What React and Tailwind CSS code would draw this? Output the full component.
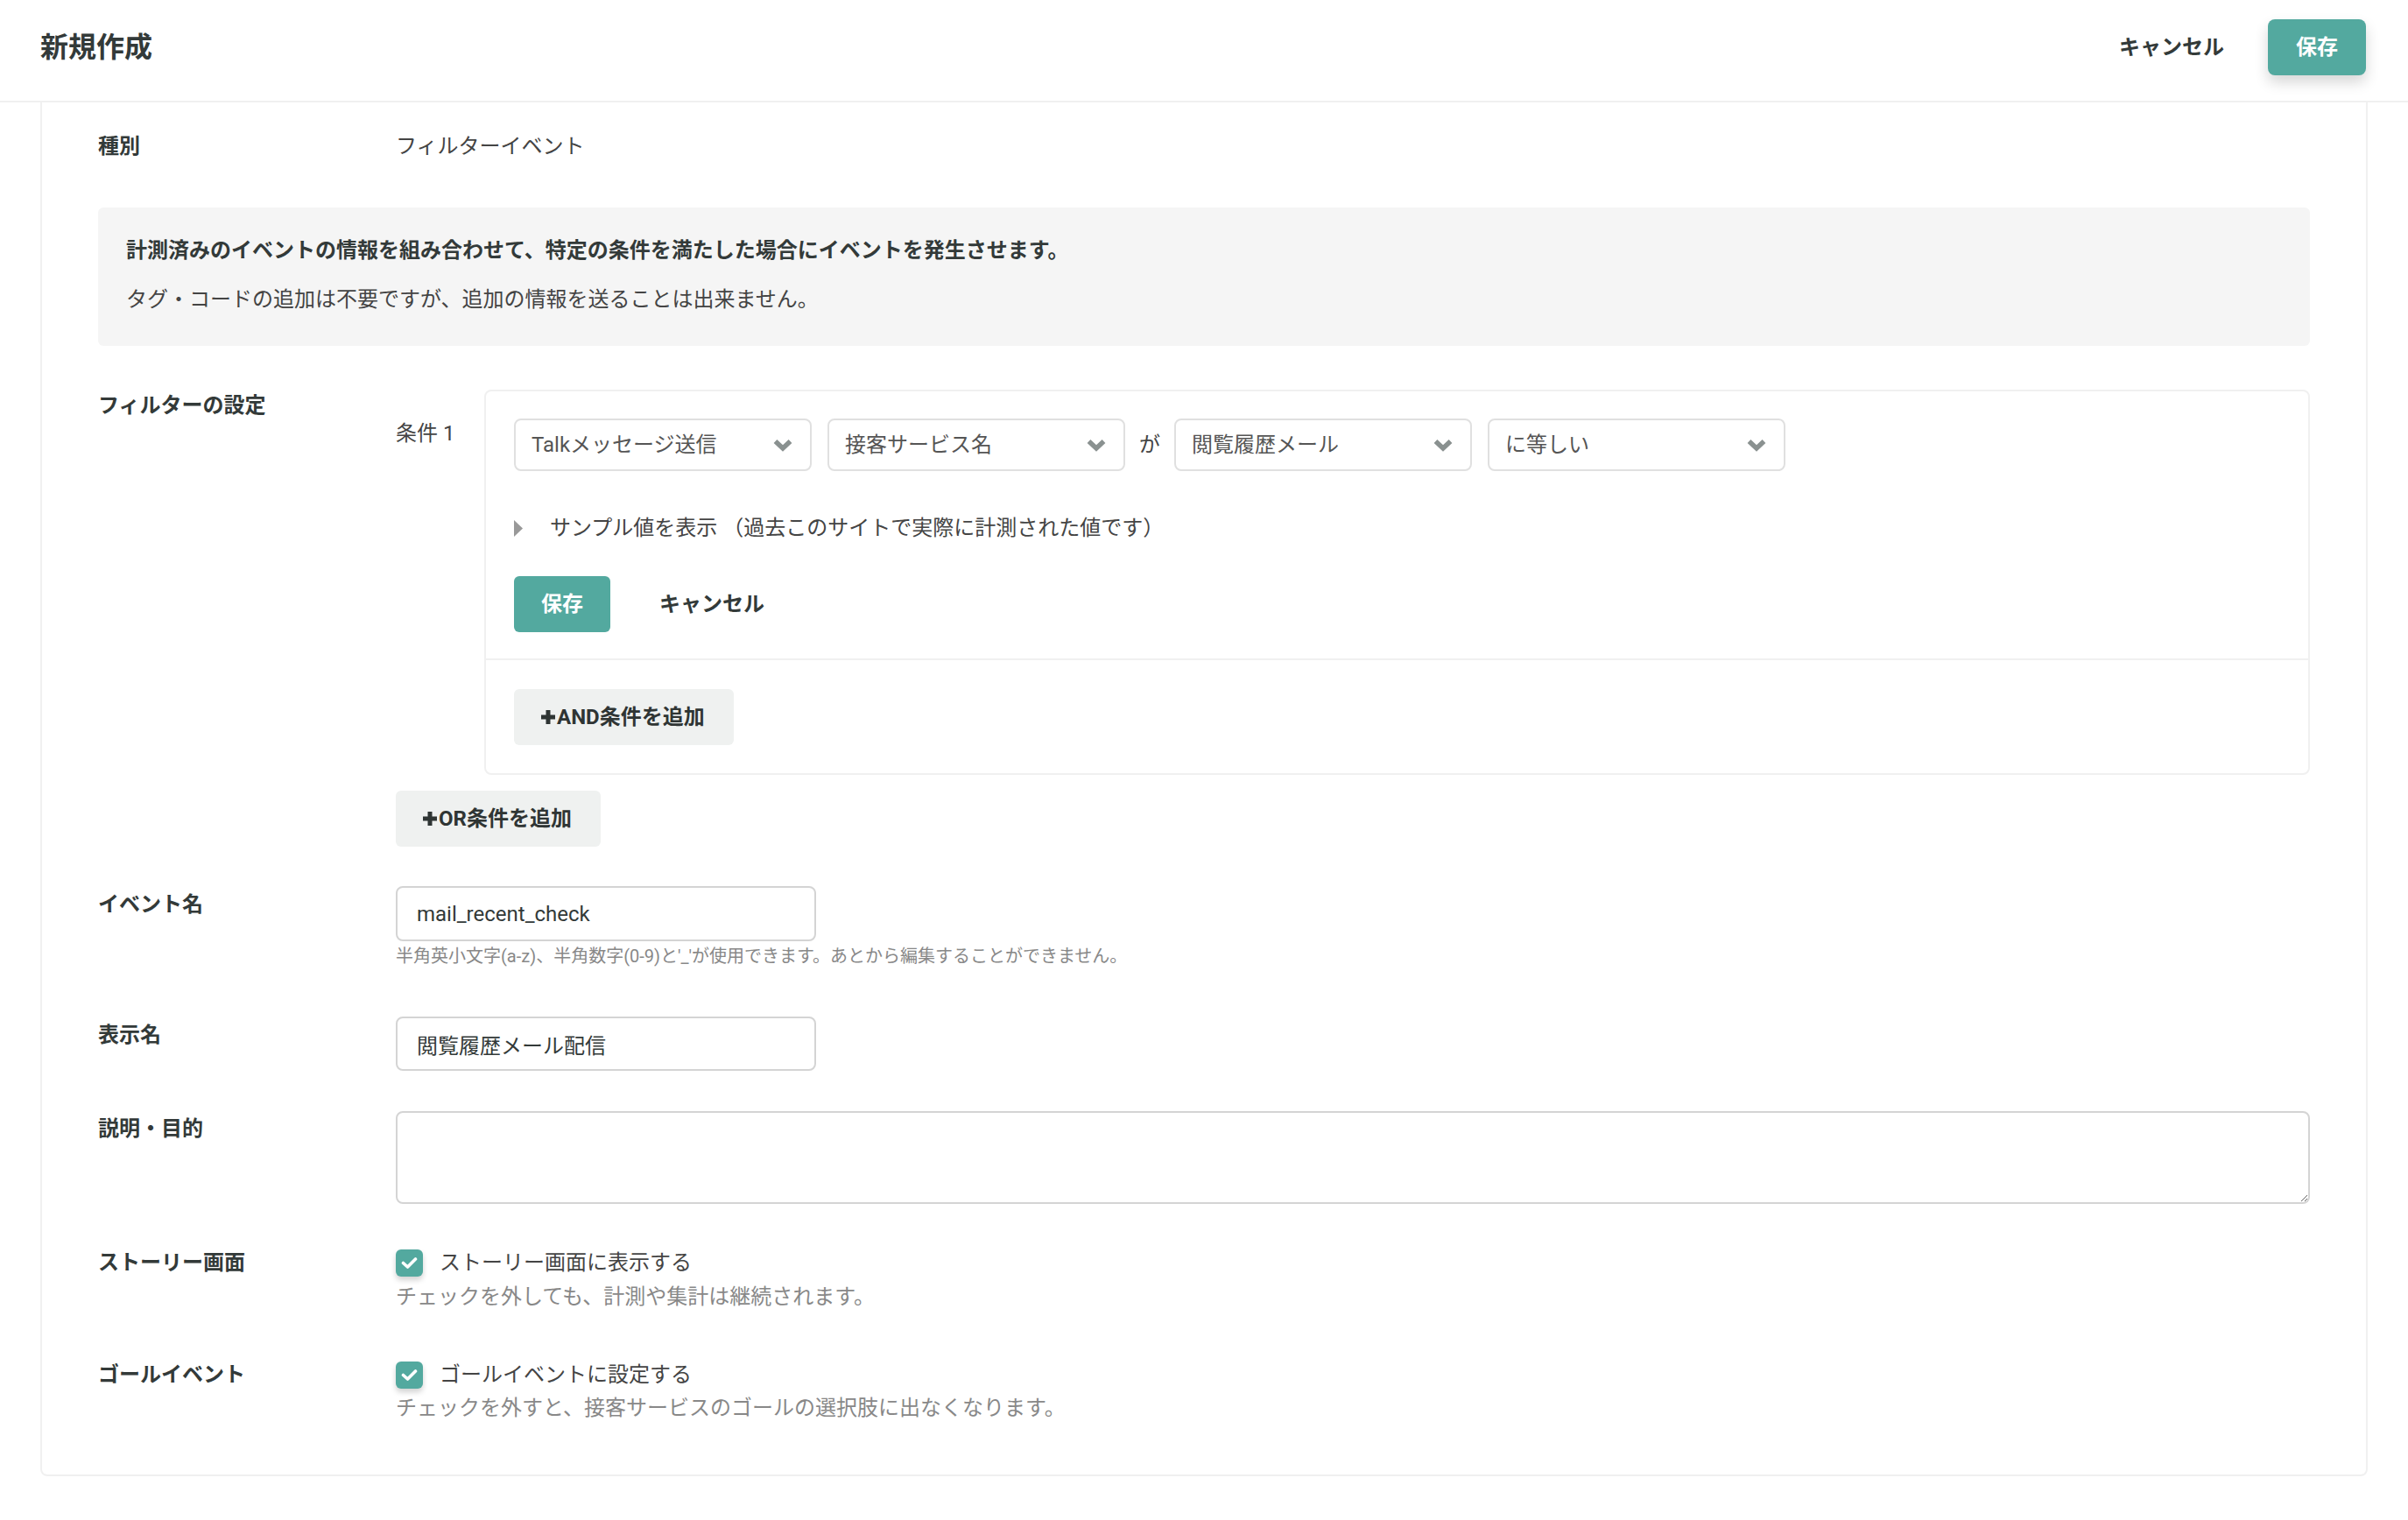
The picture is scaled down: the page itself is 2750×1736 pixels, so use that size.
import React from 'react';

function Chevron() {
  return (
    <svg width="22" height="15" viewBox="0 0 22 15" className="shrink-0">
      <polyline points="2.5,3 11,11 19.5,3" fill="none" stroke="#8a9190" strokeWidth="5.5" />
    </svg>
  );
}

function Plus() {
  return (
    <svg width="18" height="18" viewBox="0 0 18 18" className="shrink-0">
      <path d="M9 1v16M1 9h16" stroke="#2f3534" strokeWidth="5" />
    </svg>
  );
}

function Check() {
  return (
    <div className="w-[31px] h-[31px] shrink-0 rounded-[6px] bg-[#53a99f] shadow-[0_4px_6px_rgba(0,0,0,0.18)] flex items-center justify-center">
      <svg width="19" height="15" viewBox="0 0 19 15">
        <polyline points="2.5,7.5 7.5,12 16.5,3" fill="none" stroke="#fff" strokeWidth="3.6" strokeLinecap="round" strokeLinejoin="round" />
      </svg>
    </div>
  );
}

function Select({ value }) {
  return (
    <div className="w-[340px] h-[60px] shrink-0 border-2 border-[#e0e0e0] rounded-[8px] bg-white flex items-center justify-between pl-[18px] pr-[20px] text-[#555]">
      <span>{value}</span>
      <Chevron />
    </div>
  );
}

function Label({ children, className = '' }) {
  return (
    <div className={'w-[340px] shrink-0 font-bold leading-[36px] text-[#333a39] ' + className}>{children}</div>
  );
}

export default function App() {
  return (
    <div className="min-h-screen bg-white text-[24px] text-[#333a39]" style={{ fontFamily: 'Roboto, "Noto Sans CJK JP", sans-serif' }}>
      {/* Header */}
      <header className="h-[117px] border-b-2 border-[#f0f0f0] flex items-center justify-between pl-[46px] pr-[48px] pb-[7px]">
        <h1 className="text-[32px] font-bold text-[#333a39]">新規作成</h1>
        <div className="flex items-center">
          <button className="font-bold text-[#333a39] mr-[50px]">キャンセル</button>
          <button className="w-[112px] h-[64px] rounded-[8px] bg-[#53a99f] text-white font-bold shadow-[0_8px_16px_rgba(0,0,0,0.16)]">保存</button>
        </div>
      </header>

      {/* Card */}
      <div className="mx-[46px] border-x-2 border-b-2 border-[#f0f0f0] rounded-b-[8px] px-[64px] pt-[32px] pb-[58px]">
        <div className="flex">
          <Label>種別</Label>
          <div className="leading-[36px] text-[#444]">フィルターイベント</div>
        </div>

        <div className="mt-[52px] rounded-[6px] bg-[#f5f5f5] px-[32px] pt-[30px] pb-[34px]">
          <p className="font-bold leading-[38px] text-[#333a39]">計測済みのイベントの情報を組み合わせて、特定の条件を満たした場合にイベントを発生させます。</p>
          <p className="mt-[18px] leading-[38px] text-[#444]">タグ・コードの追加は不要ですが、追加の情報を送ることは出来ません。</p>
        </div>

        {/* Filter settings */}
        <div className="mt-[50px] flex">
          <Label>フィルターの設定</Label>
          <div className="flex-1 flex flex-col">
            <div className="flex">
              <div className="w-[101px] shrink-0 pt-[32px] leading-[36px] text-[#444]">条件 1</div>
              <div className="flex-1 border-2 border-[#f0f0f0] rounded-[8px]">
                <div className="px-[32px] pt-[31px] pb-[30px]">
                  <div className="flex items-center gap-[18px]">
                    <Select value="Talkメッセージ送信" />
                    <Select value="接客サービス名" />
                    <span className="-mx-[2px] text-[#444]">が</span>
                    <Select value="閲覧履歴メール" />
                    <Select value="に等しい" />
                  </div>
                  <div className="mt-[47px] flex items-center gap-[31px] leading-[36px] text-[#444]">
                    <svg width="10" height="19" viewBox="0 0 10 19" className="shrink-0">
                      <polygon points="0,0 10,9.5 0,19" fill="#999" />
                    </svg>
                    <span>サンプル値を表示 （過去このサイトで実際に計測された値です）</span>
                  </div>
                  <div className="mt-[37px] flex items-center">
                    <button className="w-[110px] h-[64px] rounded-[6px] bg-[#53a99f] text-white font-bold">保存</button>
                    <button className="ml-[56px] font-bold text-[#333a39]">キャンセル</button>
                  </div>
                </div>
                <div className="border-t-2 border-[#f0f0f0] px-[32px] pt-[33px] pb-[32px]">
                  <button className="h-[64px] pl-[30px] pr-[33px] rounded-[6px] bg-[#eff1f0] font-bold text-[#2f3534] flex items-center gap-[1px]">
                    <Plus />
                    <span>AND条件を追加</span>
                  </button>
                </div>
              </div>
            </div>
            <button className="mt-[18px] self-start h-[64px] pl-[30px] pr-[33px] rounded-[6px] bg-[#eff1f0] font-bold text-[#2f3534] flex items-center gap-[1px]">
              <Plus />
              <span>OR条件を追加</span>
            </button>
          </div>
        </div>

        {/* Event name */}
        <div className="mt-[45px] flex">
          <Label className="pt-[3px]">イベント名</Label>
          <div className="flex-1">
            <input
              readOnly
              value="mail_recent_check"
              className="w-[480px] h-[63px] border-2 border-[#d4d4d4] rounded-[8px] px-[22px] text-[#333a39] outline-none"
            />
            <div className="mt-[3px] text-[20px] leading-[28px] text-[#888]">半角英小文字(a-z)、半角数字(0-9)と'_'が使用できます。あとから編集することができません。</div>
          </div>
        </div>

        {/* Display name */}
        <div className="mt-[55px] flex">
          <Label className="pt-[3px]">表示名</Label>
          <div className="flex-1">
            <input
              readOnly
              value="閲覧履歴メール配信"
              className="w-[480px] h-[62px] border-2 border-[#d4d4d4] rounded-[8px] px-[22px] text-[#333a39] outline-none"
            />
          </div>
        </div>

        {/* Description */}
        <div className="mt-[46px] flex">
          <Label className="pt-[2px]">説明・目的</Label>
          <div className="flex-1">
            <textarea className="block w-full h-[106px] border-2 border-[#d4d4d4] rounded-[8px] px-[22px] py-[12px] outline-none" />
          </div>
        </div>

        {/* Story */}
        <div className="mt-[49px] flex">
          <Label>ストーリー画面</Label>
          <div className="flex-1">
            <div className="h-[36px] flex items-center gap-[19px] text-[#444]">
              <Check />
              <span>ストーリー画面に表示する</span>
            </div>
            <div className="mt-[3px] leading-[36px] text-[#888]">チェックを外しても、計測や集計は継続されます。</div>
          </div>
        </div>

        {/* Goal */}
        <div className="mt-[53px] flex">
          <Label>ゴールイベント</Label>
          <div className="flex-1">
            <div className="h-[36px] flex items-center gap-[19px] text-[#444]">
              <Check />
              <span>ゴールイベントに設定する</span>
            </div>
            <div className="mt-[2px] leading-[36px] text-[#888]">チェックを外すと、接客サービスのゴールの選択肢に出なくなります。</div>
          </div>
        </div>
      </div>
    </div>
  );
}
